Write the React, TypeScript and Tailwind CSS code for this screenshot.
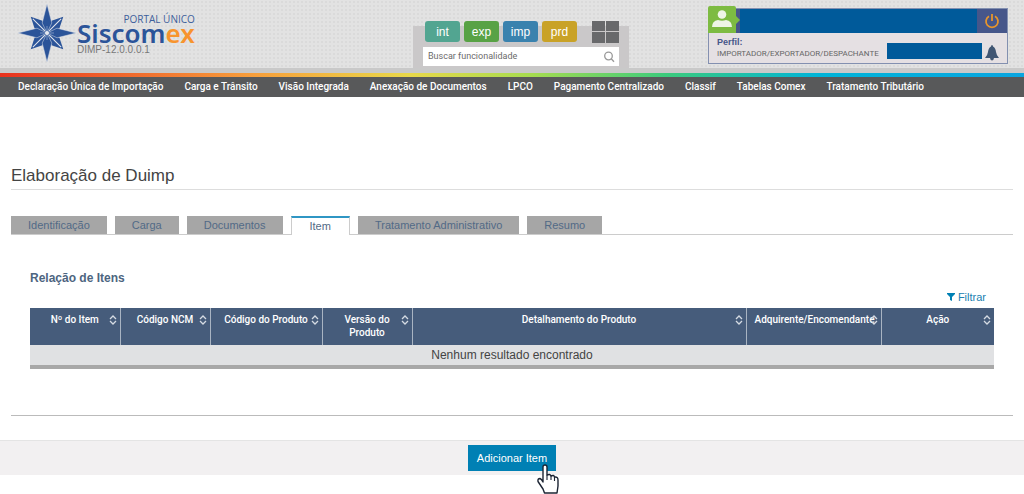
import type { ReactNode } from 'react';

type Column = {
  label: string;
  width: string;
};

const menuItems = [
  'Declaração Única de Importação',
  'Carga e Trânsito',
  'Visão Integrada',
  'Anexação de Documentos',
  'LPCO',
  'Pagamento Centralizado',
  'Classif',
  'Tabelas Comex',
  'Tratamento Tributário'
];

const environments = [
  { label: 'int', color: 'bg-[#52a591]' },
  { label: 'exp', color: 'bg-[#58a245]' },
  { label: 'imp', color: 'bg-[#3a82ae]' },
  { label: 'prd', color: 'bg-[#c9a227]' }
];

const tabs = ['Identificação', 'Carga', 'Documentos', 'Item', 'Tratamento Administrativo', 'Resumo'];

const columns: Column[] = [
  { label: 'Nº do Item', width: 'w-[90px]' },
  { label: 'Código NCM', width: 'w-[90px]' },
  { label: 'Código do Produto', width: 'w-[112px]' },
  { label: 'Versão do Produto', width: 'w-[90px]' },
  { label: 'Detalhamento do Produto', width: 'w-auto' },
  { label: 'Adquirente/Encomendante', width: 'w-[135px]' },
  { label: 'Ação', width: 'w-[113px]' }
];

function StarLogo() {
  return (
    <svg viewBox="0 0 58 58" className="h-[58px] w-[58px] shrink-0" aria-hidden="true">
      {[45, 135, 225, 315].map((angle) => (
        <g key={angle} transform={`rotate(${angle} 29 29)`}>
          <path d="M29 6 L23.500 17 L29 29 L34.500 17 Z" fill="#2b5499" />
          <path d="M29 9 L29 26" stroke="#e4e7ee" strokeWidth="1" />
        </g>
      ))}
      {[0, 90, 180, 270].map((angle) => (
        <g key={angle} transform={`rotate(${angle} 29 29)`}>
          <path d="M29 0 L24.200 19 L29 29 L33.800 19 Z" fill="#2b5499" stroke="#dfe3ea" strokeWidth="0.5" />
          <path d="M29 22 L29 29" stroke="#8ea3c8" strokeWidth="0.8" />
        </g>
      ))}
      <circle cx="29" cy="29" r="2" fill="#e8ebf1" />
    </svg>
  );
}

function SortIcon() {
  return (
    <svg viewBox="0 0 8 10" className="h-[10px] w-2" fill="none" stroke="#d5dbe3" strokeWidth="1.3" aria-hidden="true">
      <path d="M1 4 L4 1 L7 4 M1 6 L4 9 L7 6" />
    </svg>
  );
}

function HandCursor() {
  return (
    <svg
      viewBox="0 0 22 30"
      className="pointer-events-none absolute top-[19px] left-[69px] h-[30px] w-[22px]"
      fill="#fff"
      stroke="#1c2433"
      strokeWidth="1.4"
      strokeLinejoin="round"
      aria-hidden="true"
    >
      <path d="M6 18 V3 Q6 1 8 1 Q10 1 10 3 V11 Q13 9.500 14 12 Q17 10.500 17.500 13 Q21 12.500 21 16 V22 L20 29 H7.500 L6 25 L1 17.500 Q0.500 14.500 3 14.500 Q4.500 15 6 18 Z" />
      <path d="M10 11 V16 M14 12 V16 M17.500 13 V17" strokeWidth="1.1" />
    </svg>
  );
}

function Brand() {
  return (
    <div className="flex w-[316px] items-start gap-px pt-1">
      <StarLogo />
      <div className="flex flex-col pt-[9px]">
        <span className="text-right font-['Open_Sans'] text-[10px] leading-3 text-[#3d5f9c]">PORTAL ÚNICO</span>
        <span className="-mt-[6px] font-['Noto_Sans'] text-[26px] leading-[29px] font-semibold text-[#2b5499]">
          Siscom<span className="text-[#f7942e]">ex</span>
        </span>
        <span className="-mt-1 text-[10px] leading-3 text-[#777]">DIMP-12.0.0.0.1</span>
      </div>
    </div>
  );
}

function QuickSearch() {
  return (
    <div className="mt-[26px] h-[42px] w-[216px] bg-[#cac8c9] px-[10px]">
      <div className="-mt-[5px] flex justify-between pl-[2px]">
        <div className="flex gap-1">
          {environments.map((env) => (
            <button key={env.label} type="button" className={`h-[21px] w-[35px] rounded-[3px] text-xs leading-5 text-white ${env.color}`}>
              {env.label}
            </button>
          ))}
        </div>
        <button type="button" aria-label="Módulos" className="grid h-[22px] w-[27px] grid-cols-2 gap-px">
          <span className="h-[10px] bg-[#68696b]" />
          <span className="h-[10px] bg-[#68696b]" />
          <span className="h-[11px] bg-[#68696b]" />
          <span className="h-[11px] bg-[#68696b]" />
        </button>
      </div>
      <div className="mt-1 flex h-[19px] items-center bg-white pr-1 pl-[5px]">
        <input
          type="text"
          aria-label="Buscar funcionalidade"
          placeholder="Buscar funcionalidade"
          className="min-w-0 flex-1 font-['Roboto'] text-[9px] placeholder:text-[#6b6b6b] focus:outline-none"
        />
        <button type="button" aria-label="Buscar">
          <svg viewBox="0 0 12 12" className="h-3 w-3" fill="none" stroke="#999" strokeWidth="1.3" aria-hidden="true">
            <circle cx="5.500" cy="5" r="3.800" />
            <path d="M8.200 7.800 L11 10.800" />
          </svg>
        </button>
      </div>
    </div>
  );
}

function UserPanel() {
  return (
    <div className="mt-2 h-14 w-[300px] border border-[#8390b0] bg-[#e5e0e3]">
      <div className="relative flex h-6 bg-[#46568a] pl-[31px]">
        <svg viewBox="0 0 33 27" className="absolute -top-[3px] -left-px h-[27px] w-[33px]" aria-hidden="true">
          <path d="M2 0 H26 Q28 0 28 2 V10 L32 14 L28 18 V27 H0 V2 Q0 0 2 0 Z" fill="#7dbb42" />
          <circle cx="14" cy="8.500" r="4.300" fill="#eef5e6" />
          <path d="M4 21 Q4 15 10 14 Q14 15.500 18 14 Q24 15 24 21 Z" fill="#eef5e6" />
        </svg>
        <div className="flex-1 bg-[#005a9a]" />
        <button type="button" aria-label="Sair" className="flex w-[30px] items-center justify-center">
          <svg viewBox="0 0 16 16" className="h-4 w-4" fill="none" stroke="#e8952b" strokeWidth="1.8" aria-hidden="true">
            <path d="M5 3.200 A6 6 0 1 0 11 3.200 M8 1 V8" />
          </svg>
        </button>
      </div>
      <div className="flex pt-1 pl-2">
        <div className="w-[170px]">
          <div className="text-[9px] leading-[11px] font-bold text-[#46568a]">Perfil:</div>
          <div className="font-['Roboto'] text-[8px] leading-3 whitespace-nowrap text-[#666]">IMPORTADOR/EXPORTADOR/DESPACHANTE</div>
        </div>
        <div className="mt-[6px] h-4 flex-1 bg-[#005a9a]" />
        <button type="button" aria-label="Notificações" className="mt-2 mr-2 ml-[3px]">
          <svg viewBox="0 0 14 16" className="h-4 w-[14px]" fill="#415673" aria-hidden="true">
            <path d="M7 0 Q8 0 8 1.500 Q10.500 2.500 11 7 Q11.500 10.500 14 13 H9 Q8.500 15.500 7 15.500 Q5.500 15.500 5 13 H0 Q2.500 10.500 3 7 Q3.500 2.500 6 1.500 Q6 0 7 0 Z" />
          </svg>
        </button>
      </div>
    </div>
  );
}

function HeaderCell({ children, width }: { children: ReactNode; width: string }) {
  return (
    <th className={`relative border-r border-[#a9b4c2] px-1 pt-[5px] align-top font-medium last:border-r-0 ${width}`}>
      <span className="block px-1">{children}</span>
      <button type="button" aria-label="Ordenar" className="absolute top-[7px] right-[3px]">
        <SortIcon />
      </button>
    </th>
  );
}

export default function App() {
  return (
    <div className="min-h-screen bg-white font-['Liberation_Sans',Arial,sans-serif] text-[#444]">
      <header>
        <div className="flex h-[73px] justify-between border-b-[5px] border-[#c9c9c9] bg-[#e2e2e2] bg-[radial-gradient(#dadada_1px,transparent_1px)] bg-[size:4px_4px] pr-4 pl-[18px]">
          <Brand />
          <QuickSearch />
          <UserPanel />
        </div>
        <div className="h-1 bg-[linear-gradient(to_right,#e8321e,#f7a03c_25%,#e8d84a_40%,#a5dc50_52%,#3ccb7c_65%,#00b4d8_80%,#0aa5e0)]" />
        <nav className="flex h-5 items-center gap-[21px] bg-[#58595a] pb-[2px] pl-[18px] font-['Roboto'] text-[10px] font-medium text-white">
          {menuItems.map((item) => (
            <a key={item} href="#" className="whitespace-nowrap">
              {item}
            </a>
          ))}
        </nav>
      </header>

      <main className="px-[11px] pt-[67px]">
        <h1 className="h-[26px] border-b border-[#ddd] text-[17px] leading-6">Elaboração de Duimp</h1>

        <div role="tablist" className="mt-[26px] flex h-[19px] text-[11px] leading-[17px] text-[#526a86]">
          {tabs.map((tab) => {
            if (tab === 'Item') {
              return (
                <button
                  key={tab}
                  type="button"
                  role="tab"
                  aria-selected="true"
                  className="border-x border-t-2 border-x-[#ccc] border-t-[#2f96c4] bg-white px-[18px]"
                >
                  {tab}
                </button>
              );
            }
            return (
              <div
                key={tab}
                className={`border-b border-[#ccc] pr-2 last:flex-1 ${tab === 'Tratamento Administrativo' ? 'pl-2' : ''}`}
              >
                <button type="button" role="tab" aria-selected="false" className="h-[18px] bg-[#a6a6a6] px-[17px]">
                  {tab}
                </button>
              </div>
            );
          })}
        </div>

        <section className="px-[19px] pt-9">
          <h2 className="text-xs leading-[14px] font-bold text-[#4d6580]">Relação de Itens</h2>
          <div className="flex h-[23px] items-end justify-end pr-2">
            <button type="button" className="flex items-center gap-[3px] pb-1 text-[11px] leading-[14px] text-[#2080b0]">
              <svg viewBox="0 0 8 8" className="h-2 w-2" fill="#0080b4" aria-hidden="true">
                <path d="M0 0 H8 V1 L5 4 V8 L3 7 V4 L0 1 Z" />
              </svg>
              Filtrar
            </button>
          </div>
          <table className="w-full table-fixed border-collapse">
            <thead>
              <tr className="h-[37px] bg-[#465c7b] font-['Roboto'] text-[10px] leading-[13px] text-white">
                {columns.map((column) => (
                  <HeaderCell key={column.label} width={column.width}>
                    {column.label}
                  </HeaderCell>
                ))}
              </tr>
            </thead>
            <tbody>
              <tr className="h-[22px] border-b-4 border-[#a8a8a8] bg-[#e0e1e3]">
                <td colSpan={columns.length} className="text-center text-xs leading-5">
                  Nenhum resultado encontrado
                </td>
              </tr>
            </tbody>
          </table>
        </section>
        <hr className="mt-[46px] border-[#bbb]" />
      </main>

      <footer className="mt-6 flex h-[35px] justify-center border-t border-[#e4e4e4] bg-[#f2f0f1] pt-1">
        <div className="relative h-[26px]">
          <button type="button" className="h-[26px] bg-[#0080b4] px-[9px] text-[11px] text-white">
            Adicionar Item
          </button>
          <HandCursor />
        </div>
      </footer>
    </div>
  );
}
